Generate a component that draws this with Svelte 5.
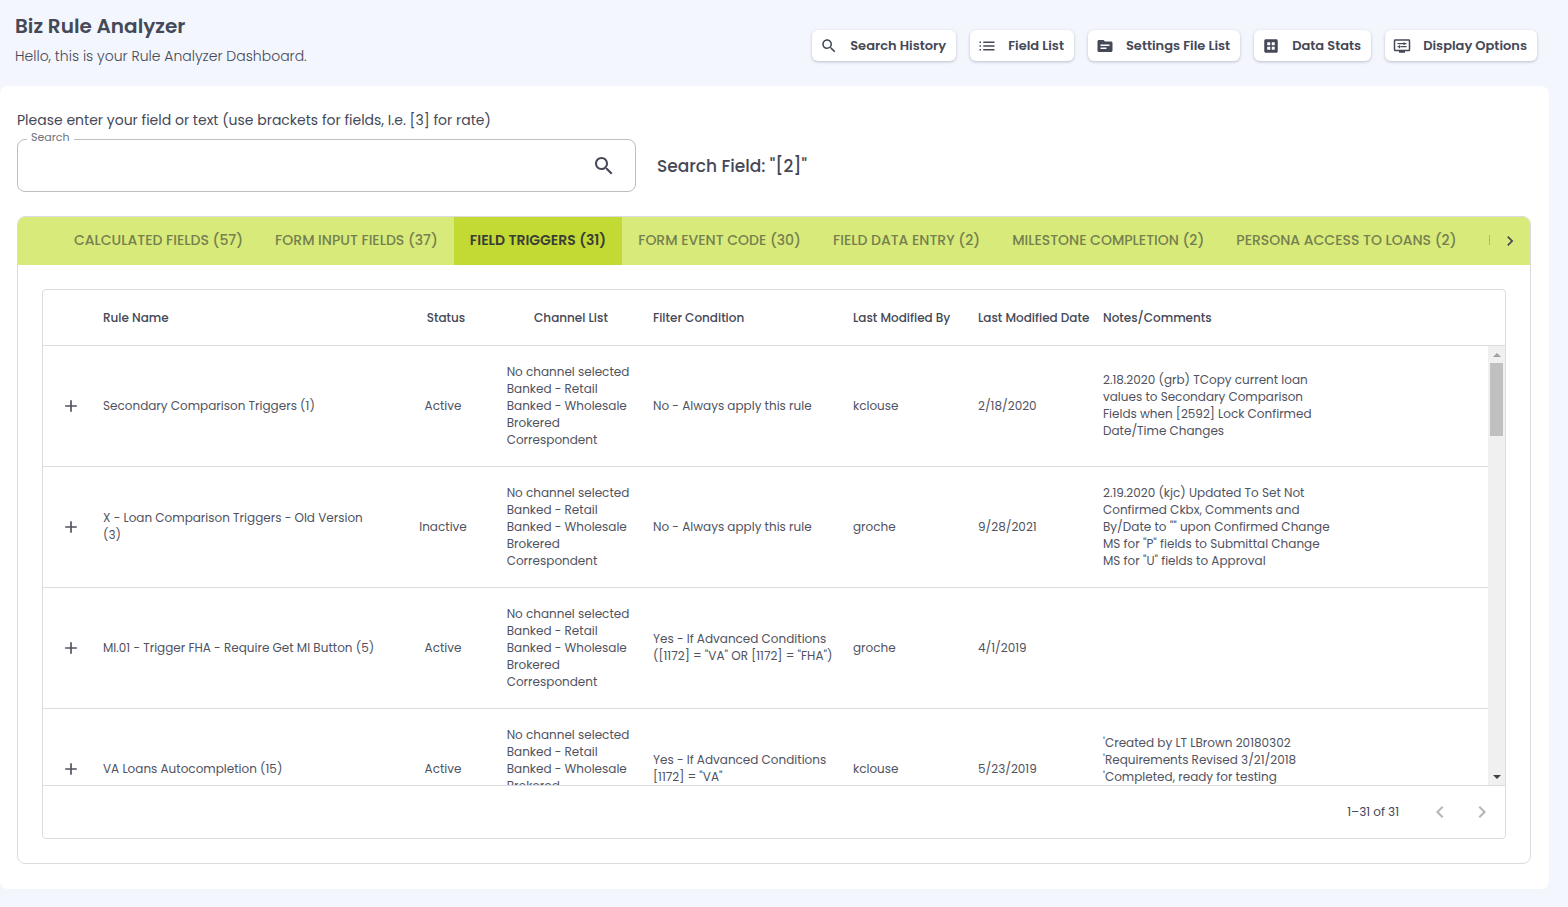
<script>
  const actions = [
    { label: 'Search History', icon: 'search' },
    { label: 'Field List', icon: 'list' },
    { label: 'Settings File List', icon: 'folder' },
    { label: 'Data Stats', icon: 'grid' },
    { label: 'Display Options', icon: 'display' }
  ];

  const icons = {
    search:
      'M15.5 14h-.79l-.28-.27C15.41 12.59 16 11.11 16 9.5 16 5.91 13.09 3 9.5 3S3 5.91 3 9.5 5.91 16 9.5 16c1.61 0 3.09-.59 4.23-1.57l.27.28v.79l5 4.99L20.49 19l-4.99-5zm-6 0C7.01 14 5 11.99 5 9.5S7.01 5 9.5 5 14 7.01 14 9.5 11.99 14 9.5 14z',
    list: 'M2 11h2v2H2zm0 5h2v2H2zm0-10h2v2H2zm5 5h15v2H7zm0 5h15v2H7zM7 6h15v2H7z',
    folder:
      'M20 6h-8l-2-2H4c-1.1 0-1.99.9-1.99 2L2 18c0 1.1.9 2 2 2h16c1.1 0 2-.9 2-2V8c0-1.1-.9-2-2-2zm-6 10H6v-2h8v2zm4-4H6v-2h12v2z',
    grid:
      'M19 3H5c-1.1 0-2 .9-2 2v14c0 1.1.9 2 2 2h14c1.1 0 2-.9 2-2V5c0-1.1-.9-2-2-2zM11 17H7v-4h4v4zm0-6H7V7h4v4zm6 6h-4v-4h4v4zm0-6h-4V7h4v4z',
    display:
      'M21 3H3c-1.1 0-2 .9-2 2v12c0 1.1.9 2 2 2h5v2h8v-2h5c1.1 0 2-.9 2-2V5c0-1.1-.9-2-2-2zm0 14H3V5h18v12zM6 8h8v1.5H6zm9.5-1v1H18v1.5h-2.500v1H14V7zM10 12h8v1.500h-8zM8 11h1.500v4H8v-1.500H6V12h2z',
    left: 'M15.41 7.41 14 6l-6 6 6 6 1.41-1.410L10.830 12z',
    right: 'M10 6 8.590 7.410 13.170 12l-4.580 4.590L10 18l6-6z',
    plus: 'M19 13h-6v6h-2v-6H5v-2h6V5h2v6h6v2z'
  };

  const tabs = [
    'Calculated Fields (57)',
    'Form Input Fields (37)',
    'Field Triggers (31)',
    'Form Event Code (30)',
    'Field Data Entry (2)',
    'Milestone Completion (2)',
    'Persona Access To Loans (2)',
    'I'
  ];

  const channels = 'No channel selected\nBanked - Retail\nBanked - Wholesale\nBrokered\nCorrespondent';

  const rules = [
    {
      name: 'Secondary Comparison Triggers (1)',
      status: 'Active',
      filter: 'No - Always apply this rule',
      by: 'kclouse',
      date: '2/18/2020',
      notes:
        '2.18.2020 (grb) TCopy current loan\nvalues to Secondary Comparison\nFields when [2592] Lock Confirmed\nDate/Time Changes'
    },
    {
      name: 'X - Loan Comparison Triggers - Old Version\n(3)',
      status: 'Inactive',
      filter: 'No - Always apply this rule',
      by: 'groche',
      date: '9/28/2021',
      notes:
        '2.19.2020 (kjc) Updated To Set Not\nConfirmed Ckbx, Comments and\nBy/Date to "" upon Confirmed Change\nMS for "P" fields to Submittal Change\nMS for "U" fields to Approval'
    },
    {
      name: 'MI.01 - Trigger FHA - Require Get MI Button (5)',
      status: 'Active',
      filter: 'Yes - If Advanced Conditions\n([1172] = "VA" OR [1172] = "FHA")',
      by: 'groche',
      date: '4/1/2019',
      notes: ''
    },
    {
      name: 'VA Loans Autocompletion (15)',
      status: 'Active',
      filter: 'Yes - If Advanced Conditions\n[1172] = "VA"',
      by: 'kclouse',
      date: '5/23/2019',
      notes: "'Created by LT LBrown 20180302\n'Requirements Revised 3/21/2018\n'Completed, ready for testing\n\n"
    }
  ];

  let activeTab = $state(2);
  let query = $state('');
  let body;

  function scrollRows(amount) {
    body.scrollBy({ top: amount });
  }
</script>

{#snippet icon(name)}
  <svg class="icon" viewBox="0 0 24 24" aria-hidden="true"><path d={icons[name]} /></svg>
{/snippet}

<div class="page">
  <header>
    <div>
      <h1>Biz Rule Analyzer</h1>
      <p class="subtitle">Hello, this is your Rule Analyzer Dashboard.</p>
    </div>
    <div class="actions">
      {#each actions as action}
        <button class="action">{@render icon(action.icon)}{action.label}</button>
      {/each}
    </div>
  </header>

  <main>
    <p class="hint">Please enter your field or text (use brackets for fields, I.e. [3] for rate)</p>
    <div class="search-row">
      <div class="search-box">
        <label for="search">Search</label>
        <input id="search" type="text" bind:value={query} />
        <button class="search-button" aria-label="Search">{@render icon('search')}</button>
      </div>
      <p class="search-field">Search Field: "[2]"</p>
    </div>

    <section class="card">
      <div class="tab-bar">
        <div class="tabs" role="tablist">
          {#each tabs as tab, i}
            <button
              class="tab"
              class:active={activeTab === i}
              role="tab"
              aria-selected={activeTab === i}
              onclick={() => (activeTab = i)}
            >
              {tab}
            </button>
          {/each}
        </div>
        <button class="tab-scroll" aria-label="Next tabs">{@render icon('right')}</button>
      </div>

      <div class="frame">
        <div class="rows">
          <table>
            <thead>
              <tr>
                <th></th>
                <th>Rule Name</th>
                <th class="center">Status</th>
                <th class="center">Channel List</th>
                <th>Filter Condition</th>
                <th>Last Modified By</th>
                <th>Last Modified Date</th>
                <th>Notes/Comments</th>
              </tr>
            </thead>
            <tbody bind:this={body}>
              {#each rules as rule}
                <tr>
                  <td class="expand">
                    <button aria-label="Expand row">{@render icon('plus')}</button>
                  </td>
                  <td>{rule.name}</td>
                  <td class="center">{rule.status}</td>
                  <td class="channels">{channels}</td>
                  <td>{rule.filter}</td>
                  <td>{rule.by}</td>
                  <td>{rule.date}</td>
                  <td>{rule.notes}</td>
                </tr>
              {/each}
            </tbody>
          </table>
          <div class="scrollbar">
            <button class="up" aria-label="Scroll up" onclick={() => scrollRows(-40)}></button>
            <div class="thumb"></div>
            <button class="down" aria-label="Scroll down" onclick={() => scrollRows(40)}></button>
          </div>
        </div>
        <footer>
          <span>1–31 of 31</span>
          <button disabled aria-label="Previous page">{@render icon('left')}</button>
          <button disabled aria-label="Next page">{@render icon('right')}</button>
        </footer>
      </div>
    </section>
  </main>
</div>

<style>
  :global(body) {
    background: #f3f6fd;
  }

  .page {
    box-sizing: border-box;
    min-height: 100vh;
    padding: 0 19px 18px 0;
    font-family: Poppins, Inter, sans-serif;
    color: #454857;
  }

  h1,
  p {
    margin: 0;
  }

  button {
    display: flex;
    align-items: center;
    justify-content: center;
    padding: 0;
    border: none;
    background: none;
    font-family: inherit;
    color: inherit;
    cursor: pointer;
  }

  .icon {
    width: 24px;
    height: 24px;
    flex: none;
    fill: currentColor;
  }

  header {
    box-sizing: border-box;
    display: flex;
    justify-content: space-between;
    height: 86px;
    padding: 10px 12px 0 15px;
  }

  h1 {
    font-size: 20px;
    line-height: 32px;
    font-weight: 600;
  }

  .subtitle {
    font-size: 14px;
    line-height: 28px;
    font-weight: 300;
  }

  .actions {
    display: flex;
    gap: 14px;
    padding-top: 20px;
  }

  .action {
    height: 31px;
    padding: 0 10px 0 8px;
    gap: 12px;
    border-radius: 6px;
    background: white;
    box-shadow: 0 1px 3px rgba(60, 64, 80, 0.3);
    font-size: 13px;
    font-weight: 600;
    white-space: nowrap;
  }

  .action .icon {
    width: 18px;
    height: 18px;
  }

  main {
    padding: 22px 18px 25px 17px;
    border-radius: 8px;
    background: white;
  }

  .hint {
    font-size: 14px;
    line-height: 24px;
  }

  .search-row {
    display: flex;
    align-items: center;
    gap: 21px;
    margin: 7px 0 24px;
  }

  .search-box {
    position: relative;
    box-sizing: border-box;
    display: flex;
    width: calc(50% - 138px);
    height: 53px;
    border: 1px solid #bcbdc2;
    border-radius: 8px;
  }

  .search-box label {
    position: absolute;
    top: -10px;
    left: 9px;
    padding: 0 4px;
    background: white;
    font-size: 11px;
    line-height: 14px;
    color: #70727d;
  }

  .search-box input {
    flex: 1;
    padding: 0 14px;
    border: none;
    outline: none;
    background: none;
    font: inherit;
    color: inherit;
  }

  .search-button {
    width: 62px;
  }

  .search-field {
    font-size: 17px;
    line-height: 24px;
    font-weight: 500;
  }

  .card {
    border: 1px solid #dcdce0;
    border-radius: 8px;
    overflow: hidden;
  }

  .tab-bar {
    display: flex;
    height: 48px;
    padding-left: 40px;
    background: #d8ea7a;
  }

  .tabs {
    display: flex;
    flex: 1;
    min-width: 0;
    overflow: hidden;
  }

  .tab {
    flex: none;
    padding: 0 16px 2px;
    font-size: 14px;
    font-weight: 500;
    text-transform: uppercase;
    white-space: nowrap;
    color: #75804f;
  }

  .tab.active {
    background: #c3da35;
    color: #3a3d35;
    font-weight: 600;
  }

  .tab-scroll {
    width: 40px;
  }

  .tab-scroll .icon,
  .expand .icon {
    width: 20px;
    height: 20px;
  }

  .frame {
    margin: 24px;
    border: 1px solid #dcdce0;
    border-radius: 4px;
  }

  .rows {
    display: grid;
    grid-template-columns: 1fr 17px;
    grid-template-rows: 56px calc(100vh - 468px);
    border-bottom: 1px solid #dcdce0;
  }

  /* header spans the scrollbar column, the body sits beside it */
  table {
    display: contents;
  }

  thead {
    display: block;
    grid-column: 1 / -1;
  }

  tbody {
    display: block;
    overflow-y: auto;
    scrollbar-width: none;
  }

  tr {
    display: grid;
    grid-template-columns: 50px 300px 100px 150px 200px 125px 125px 250px;
    align-items: center;
    border-bottom: 1px solid #dcdce0;
  }

  thead tr {
    box-sizing: border-box;
    height: 56px;
  }

  tbody tr {
    height: 120px;
  }

  th,
  td {
    padding: 0 10px;
    font-size: 12px;
    line-height: 17px;
    text-align: left;
    white-space: pre-line;
  }

  td {
    padding-bottom: 2px;
    color: #50535f;
  }

  th {
    padding-right: 4px;
    font-weight: 500;
    white-space: nowrap;
  }

  .center {
    text-align: center;
  }

  .channels {
    justify-self: center;
  }

  .expand {
    padding: 0 0 0 18px;
  }

  .scrollbar {
    display: flex;
    flex-direction: column;
    background: #f0f0f0;
  }

  .scrollbar button {
    height: 17px;
  }

  .up::before,
  .down::before {
    content: '';
    border: 4px solid transparent;
    border-top-width: 0;
    border-bottom: 4px solid #a0a0a0;
  }

  .down::before {
    border-top: 4px solid #404040;
    border-bottom-width: 0;
  }

  .down {
    margin-top: auto;
  }

  .thumb {
    height: 73px;
    margin: 0 2px;
    background: #c0c0c0;
  }

  footer {
    display: flex;
    align-items: center;
    justify-content: flex-end;
    gap: 18px;
    height: 52px;
    padding-right: 11px;
    font-size: 12px;
  }

  footer span {
    margin-right: 11px;
  }

  footer button {
    color: #b4b5bb;
  }
</style>
